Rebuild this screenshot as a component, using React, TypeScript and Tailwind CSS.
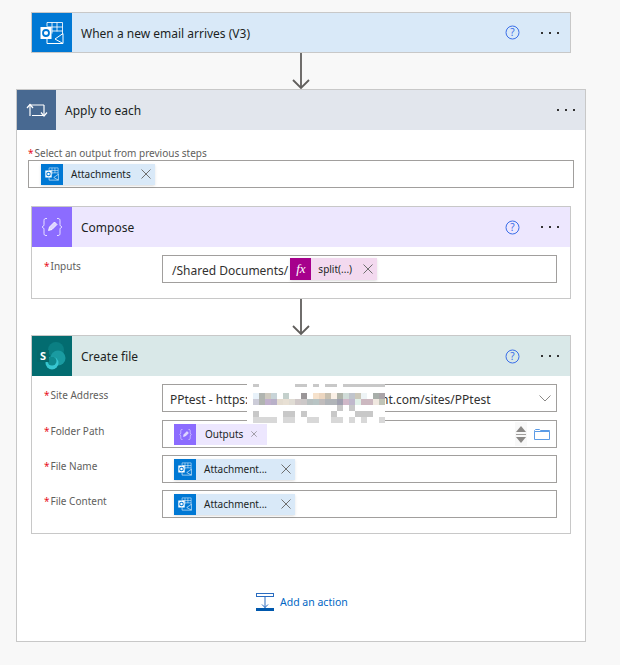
import type { ReactNode } from "react";

const font = "font-['Noto_Sans',sans-serif]";

const OutlookIcon = ({ size = 24 }: { size?: number }) => (
  <svg width={size} height={size} viewBox="0 0 24 24" fill="none">
    <path d="M7 1.500h15.500v12M7 1.500v4M12 1.500v11M17 1.500v9M7 6h15.500M12 10h10.500" stroke="white" strokeOpacity="0.85" strokeWidth="1" />
    <path d="M7 17.500v5h16v-10l-8 5.500" stroke="white" strokeWidth="1" />
    <path d="M15 18l8 4.500" stroke="white" strokeWidth="1" />
    <rect x="0.500" y="6" width="11" height="12" fill="white" />
    <circle cx="6" cy="12" r="3" stroke="#0078d4" strokeWidth="1.800" />
  </svg>
);

const LoopIcon = () => (
  <svg width="22" height="16" viewBox="0 0 22 16" fill="none" stroke="white" strokeWidth="1.200">
    <path d="M4 14V3h14" />
    <path d="M1 6l3-3.500L7 6" />
    <path d="M18 3v10.500H6" />
    <path d="M15 10.500l3 3.500 3-3.500" />
  </svg>
);

const ComposeIcon = ({ size = 22 }: { size?: number }) => (
  <svg width={size} height={size} viewBox="0 0 22 22" fill="none" stroke="white" strokeOpacity="0.8" strokeWidth="1">
    <path d="M6 2.500H5c-1.500 0-2 .8-2 2v4c0 1.200-.7 2-2 2.500 1.300.5 2 1.300 2 2.500v4c0 1.200.5 2 2 2h1" />
    <path d="M16 2.500h1c1.500 0 2 .8 2 2v4c0 1.200.7 2 2 2.500-1.300.5-2 1.300-2 2.500v4c0 1.200-.5 2-2 2h-1" />
    <path d="M7.500 14.500l1-3.500 5-5 2.500 2.500-5 5z" fill="white" fillOpacity="0.7" />
  </svg>
);

const SharePointIcon = () => (
  <svg width="30" height="30" viewBox="0 0 30 30">
    <circle cx="19" cy="9" r="8" fill="#0b7f83" />
    <circle cx="21" cy="17" r="7.500" fill="#1a9ba1" />
    <circle cx="15" cy="22" r="6.500" fill="#37c6d0" />
    <circle cx="15" cy="20" r="4.500" fill="#0f8a8e" />
    <rect x="0" y="9" width="12" height="12" fill="#05686b" />
    <text x="6" y="19" fontSize="11" fontWeight="700" fill="white" textAnchor="middle" fontFamily="Noto Sans, sans-serif">
      S
    </text>
  </svg>
);

const HelpIcon = () => (
  <svg width="15" height="15" viewBox="0 0 15 15" fill="none">
    <circle cx="7.500" cy="7.500" r="6.500" stroke="#3b6fe8" />
    <text x="7.500" y="11" fontSize="10" fill="#3b6fe8" textAnchor="middle" fontFamily="Noto Sans, sans-serif">
      ?
    </text>
  </svg>
);

const Dots = () => (
  <div className="flex gap-[6px]">
    <span className="h-[2px] w-[2px] bg-[#333333]" />
    <span className="h-[2px] w-[2px] bg-[#333333]" />
    <span className="h-[2px] w-[2px] bg-[#333333]" />
  </div>
);

const Close = ({ size = 10 }: { size?: number }) => (
  <svg width={size} height={size} viewBox="0 0 10 10" fill="none" stroke="#6f6f6f" strokeWidth="1">
    <path d="M0.500 0.500l9 9M9.500 0.500l-9 9" />
  </svg>
);

const Arrow = () => (
  <div className="flex h-[36px] justify-center">
    <svg width="20" height="36" viewBox="0 0 20 36" fill="none" stroke="#605e5c" strokeWidth="1.800">
      <path d="M10 0v35" />
      <path d="M2 27l8 8 8-8" />
    </svg>
  </div>
);

const Header = ({
  title,
  icon,
  bg,
  iconBg,
  height = "h-[40px]",
}: {
  title: string;
  icon: ReactNode;
  bg: string;
  iconBg: string;
  height?: string;
}) => (
  <div className={`flex items-center ${height} ${bg}`}>
    <div className={`flex h-full w-[40px] items-center justify-center ${iconBg}`}>{icon}</div>
    <span className="ml-[9px] flex-1 pt-[2px] text-[12px] text-[#201f1e]">{title}</span>
    <HelpIcon />
    <div className="mr-[11px] ml-[21px]">
      <Dots />
    </div>
  </div>
);

const Chip = ({ label, width }: { label: string; width: string }) => (
  <div className={`flex h-[21px] items-center bg-[#d9e9f8] shadow-sm ${width}`}>
    <div className="flex h-full w-[22px] items-center justify-center bg-[#0078d4]">
      <OutlookIcon size={14} />
    </div>
    <span className="ml-[8px] flex-1 pt-px text-[10px] text-[#201f1e]">{label}</span>
    <div className="mr-[4px]">
      <Close />
    </div>
  </div>
);

const Field = ({ label, children, className = "" }: { label: string; children: ReactNode; className?: string }) => (
  <div className={`flex ${className}`}>
    <div className="w-[130px] pt-[4px] pl-[12px] text-[10px] leading-[14px] text-[#605e5c]">
      <span className="mr-[1px] text-[#e81123]">*</span>
      {label}
    </div>
    <div className="flex h-[28px] w-[395px] items-center border border-[#a19f9d] pl-[11px]">{children}</div>
  </div>
);

// pixelated patch that hides part of the site url
const blank = "";
const g = "#c8c8c8";
const d = "#d8d8d8";
const mosaic: string[][] = [
  [blank, g, blank, blank, blank, blank, blank, blank, g, g, blank, g, blank, g, g, blank, g, g, g, g, g, g, g],
  Array(23).fill(blank),
  [blank, "#e8f2fa", "#b0b4b0", "#cfcac0", "#c8d4d8", blank, "#c4d0cc", blank, blank, "#9a9698", blank, "#f6e2cc", "#ecd6c0", "#c8c0b0", "#faf0e6", "#b0b4aa", "#d0dcd8", "#c0c4cc", "#ccc8ba", "#eef4f6", blank, "#a8aeaa", "#aaa4a8"],
  [blank, "#ccccd8", "#b0b4b0", "#c0b0cc", "#b8b0c8", "#e4dcd0", "#e8e0d4", "#e0dcd4", "#d0c8c8", "#ccc8c8", "#b8c0c0", "#b8c4c4", "#c0bcbc", "#b0b4b8", "#b0b4b8", "#a0a0b0", "#d0b8c8", "#c0b8cc", "#e0f0e8", "#ccb8c0", "#ccb8c0", "#f0e8e0", "#c0c4b8"],
  [blank, blank, blank, blank, blank, blank, blank, blank, blank, blank, blank, blank, blank, blank, blank, g, blank, g, blank, blank, blank, blank, blank],
  [blank, g, blank, blank, blank, blank, g, g, blank, g, blank, blank, blank, blank, g, blank, blank, blank, g, g, g, blank, blank],
  [blank, d, d, d, d, blank, d, d, blank, blank, d, d, blank, blank, d, d, blank, d, blank, d, blank, blank, d],
];

const Mosaic = () => (
  <div className="absolute top-[48px] left-[215px] grid w-[138px] grid-cols-[repeat(23,6px)] grid-rows-[3px_repeat(6,6px)] bg-white">
    {mosaic.flatMap((row, r) =>
      row.map((c, i) => <span key={`${r}-${i}`} style={{ backgroundColor: c || undefined }} />),
    )}
  </div>
);

export default function App() {
  return (
    <div className={`min-h-[665px] bg-[#f8f8f8] pt-[12px] ${font}`}>
      <div className="ml-[31px] w-[540px]">
        <div className="border border-[#c8c8c8]">
          <Header
            title="When a new email arrives (V3)"
            icon={<OutlookIcon />}
            bg="bg-[#d9e9f8]"
            iconBg="bg-[#0078d4]"
            height="h-[39px]"
          />
        </div>
        <Arrow />
      </div>

      <div className="ml-[16px] h-[553px] w-[570px] border border-[#c8c8c8] bg-white">
        <div className="flex h-[40px] items-center bg-[#e2e6ed]">
          <div className="flex h-full w-[39px] items-center justify-center bg-[#486991]">
            <LoopIcon />
          </div>
          <span className="ml-[9px] flex-1 pt-[2px] text-[12px] text-[#201f1e]">Apply to each</span>
          <div className="mr-[10px]">
            <Dots />
          </div>
        </div>

        <div className="pt-[16px] pl-[11px]">
          <div className="text-[10px] leading-[14px] text-[#605e5c]">
            <span className="mr-[1px] text-[#e81123]">*</span>Select an output from previous steps
          </div>
          <div className="flex h-[28px] w-[546px] items-center border border-[#a19f9d] pl-[12px]">
            <Chip label="Attachments" width="w-[114px]" />
          </div>
        </div>

        <div className="mt-[18px] ml-[14px] h-[93px] w-[540px] border border-[#c8c8c8]">
          <Header title="Compose" icon={<ComposeIcon />} bg="bg-[#ede7fe]" iconBg="bg-[#8c6cff]" />
          <Field label="Inputs" className="mt-[8px]">
            <span className="mr-[2px] -ml-[2px] pt-[3px] text-[12px] text-[#323130]">/Shared Documents/</span>
            <div className="flex h-[22px] w-[87px] items-center bg-[#f3d9ef] shadow-sm">
              <div className="flex h-full w-[21px] items-center justify-center bg-[#a6008c] font-['Liberation_Serif',serif] text-[13px] text-white italic">
                fx
              </div>
              <span className="ml-[7px] flex-1 text-[10px] text-[#201f1e]">split(...)</span>
              <div className="mr-[4px]">
                <Close />
              </div>
            </div>
          </Field>
        </div>

        <div className="ml-[14px] w-[540px]">
          <Arrow />
        </div>

        <div className="relative ml-[14px] h-[199px] w-[540px] border border-[#c8c8c8]">
          <Header title="Create file" icon={<SharePointIcon />} bg="bg-[#d9e8e8]" iconBg="bg-[#036c70]" />
          <Field label="Site Address" className="mt-[8px]">
            <div className="-ml-[4px] flex items-center text-[12px] text-[#323130]">
              <span className="w-[211px] pt-[3px]">PPtest - https:</span>
              <span className="w-[158px] pt-[3px]">nt.com/sites/PPtest</span>
              <svg width="12" height="7" viewBox="0 0 12 7" fill="none" stroke="#8a8886">
                <path d="M0.500 0.500l5.500 5.500 5.500-5.500" />
              </svg>
            </div>
          </Field>
          <Field label="Folder Path" className="mt-[8px]">
            <div className="flex h-[21px] w-[93px] items-center bg-[#ede7fe]">
              <div className="flex h-full w-[22px] items-center justify-center bg-[#8c6cff]">
                <ComposeIcon size={13} />
              </div>
              <span className="ml-[9px] flex-1 text-[10px] text-[#201f1e]">Outputs</span>
              <div className="mr-[10px]">
                <Close size={6} />
              </div>
            </div>
            <div className="ml-[248px] flex h-[24px] w-[12px] flex-col items-center justify-center gap-[2px] bg-[#f8f8f8]">
              <span className="h-0 w-0 border-x-[5px] border-b-[6px] border-x-transparent border-b-[#8a8886]" />
              <span className="h-px w-[10px] bg-[#a19f9d]" />
              <span className="h-0 w-0 border-x-[5px] border-t-[6px] border-x-transparent border-t-[#8a8886]" />
            </div>
            <svg className="ml-[7px]" width="16" height="12" viewBox="0 0 16 12" fill="none" stroke="#5b9be6">
              <path d="M0.500 3.500h15v8h-15zM0.500 3.500v-1l1-1h4l1 1h9v1" />
            </svg>
          </Field>
          <Field label="File Name" className="mt-[7px]">
            <Chip label="Attachment..." width="w-[121px]" />
          </Field>
          <Field label="File Content" className="mt-[7px]">
            <Chip label="Attachment..." width="w-[121px]" />
          </Field>
          <Mosaic />
        </div>

        <div className="mt-[59px] ml-[239px] flex items-center">
          <svg width="18" height="18" viewBox="0 0 18 18" fill="none" stroke="#2a6cc0">
            <rect x="0.500" y="0.500" width="17" height="3" />
            <path d="M9 4v11M6 11.500l3 3 3-3" />
            <rect x="0" y="15" width="18" height="3" fill="#0058ad" stroke="none" />
          </svg>
          <span className="ml-[6px] pt-[2px] text-[10.500px] text-[#0066c4]">Add an action</span>
        </div>
      </div>
    </div>
  );
}
